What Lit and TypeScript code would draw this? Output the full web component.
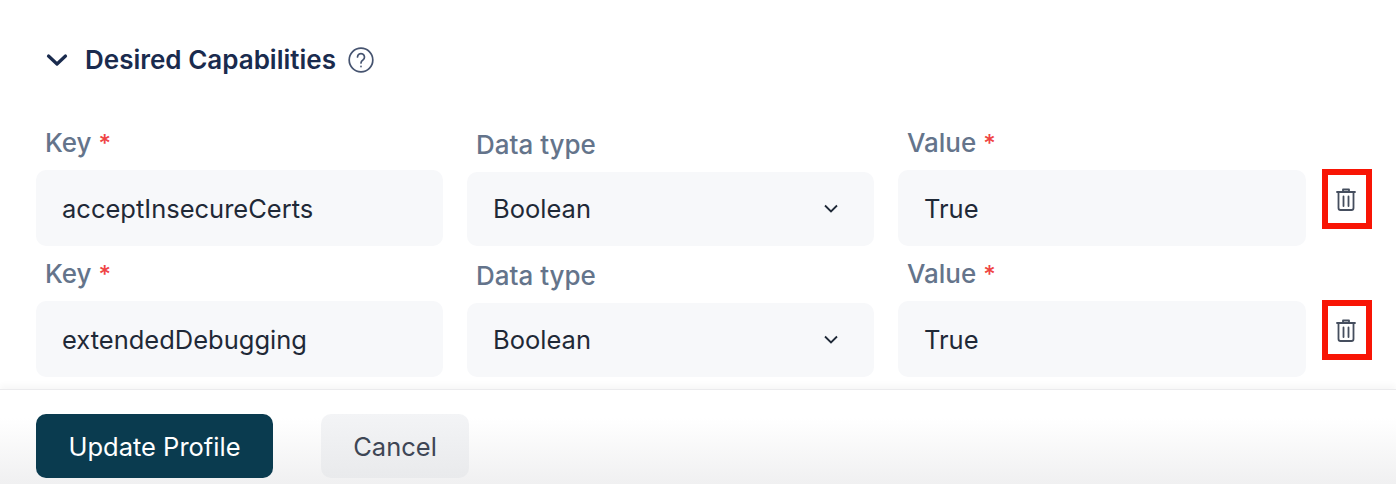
import { LitElement, html, css, svg } from 'lit'
import { customElement } from 'lit/decorators.js'

interface Capability {
  readonly key: string
  readonly type: string
  readonly value: string
}

const CAPABILITIES: ReadonlyArray<Capability> = [
  { key: 'acceptInsecureCerts', type: 'Boolean', value: 'True' },
  { key: 'extendedDebugging', type: 'Boolean', value: 'True' },
]

const trashIcon = svg`
  <svg class="trash" width="20" height="24" viewBox="0 0 20 24" fill="none" stroke="#454e5e" stroke-width="1.8" stroke-linecap="round" stroke-linejoin="round">
    <path d="M1 5h18" />
    <path d="M7 5V2.5h6V5" />
    <path d="M2.5 5v16A2 2 0 0 0 4.5 23h11a2 2 0 0 0 2-2V5" />
    <path d="M7.5 9.5v9.5M12.5 9.5v9.5" />
  </svg>
`

@customElement('app-root')
export class AppRoot extends LitElement {
  static override styles = css`
    :host {
      display: block;
      height: 484px;
      overflow: hidden;
      background: #fff;
      font-family: Inter, 'Noto Sans', sans-serif;
      color: #1f2937;
    }

    .heading {
      display: flex;
      align-items: center;
      height: 120px;
      padding: 0 0 1px 46px;
      box-sizing: border-box;
    }

    .heading h2 {
      margin: 0 12px 0 17px;
      font-size: 26px;
      font-weight: 600;
      color: #1a2b4e;
    }

    .rows {
      height: 269px;
      padding-left: 36px;
      box-sizing: border-box;
    }

    .row {
      display: flex;
      height: 131px;
    }

    .fields {
      display: grid;
      grid-template-columns: 407px 407px 408px;
      gap: 24px;
    }

    .field {
      display: flex;
      flex-direction: column;
    }

    label {
      height: 50px;
      box-sizing: border-box;
      padding: 8px 0 0 9px;
      font-size: 26px;
      font-weight: 500;
      line-height: 30px;
      color: #64748b;
    }

    .required {
      font-size: 24px;
      color: #ef4444;
    }

    .control {
      display: flex;
      align-items: center;
      justify-content: space-between;
      height: 76px;
      box-sizing: border-box;
      padding: 1px 26px 0;
      border-radius: 10px;
      background: #f7f8fa;
      font-size: 25.5px;
      color: #1f2937;
    }

    .select {
      height: 74px;
      margin-top: 2px;
    }

    .select.control {
      padding: 0 35px 1px 26px;
    }

    .field.type label {
      padding-top: 10px;
    }

    .remove {
      display: flex;
      align-items: center;
      justify-content: center;
      align-self: start;
      width: 50px;
      height: 60px;
      margin: 49px 0 0 16px;
      padding-right: 2px;
      box-sizing: border-box;
      border: 6px solid #f81505;
    }

    .footer {
      display: flex;
      gap: 48px;
      height: 95px;
      box-sizing: border-box;
      padding: 24px 0 0 36px;
      border-top: 1px solid #ebebed;
      box-shadow: 0 -4px 6px rgba(0, 0, 0, 0.03);
      background: linear-gradient(#fff 30%, #f0f0f1 100%);
    }

    button {
      height: 64px;
      border: none;
      border-radius: 10px;
      font-family: inherit;
      font-size: 25.5px;
      font-weight: 400;
    }

    .primary {
      width: 237px;
      background: #0a3b4f;
      color: #fff;
    }

    .secondary {
      width: 148px;
      background: linear-gradient(#f3f4f6, #e9eaec);
      color: #3e4655;
    }
  `

  private renderRow(row: Capability) {
    return html`
      <div class="row">
        <div class="fields">
          <div class="field">
            <label>Key <span class="required">*</span></label>
            <div class="control">${row.key}</div>
          </div>
          <div class="field type">
            <label>Data type</label>
            <div class="control select">
              ${row.type}
              <svg width="16" height="10" viewBox="0 0 16 10" fill="none" stroke="#1f2937" stroke-width="1.8">
                <path d="M2 1.5l6 6 6-6" />
              </svg>
            </div>
          </div>
          <div class="field">
            <label>Value <span class="required">*</span></label>
            <div class="control">${row.value}</div>
          </div>
        </div>
        <div class="remove">${trashIcon}</div>
      </div>
    `
  }

  override render() {
    return html`
      <div class="heading">
        <svg width="22" height="14" viewBox="0 0 22 14" fill="none" stroke="#1a2b4e" stroke-width="3.2" stroke-linecap="round" stroke-linejoin="round">
          <path d="M2.5 3l8.5 8 8.5-8" />
        </svg>
        <h2>Desired Capabilities</h2>
        <svg width="26" height="26" viewBox="0 0 26 26" fill="none" stroke="#45536f" stroke-width="1.7" stroke-linecap="round">
          <circle cx="13" cy="13" r="11.8" />
          <path d="M9.5 10a3.5 3.5 0 1 1 5.4 3c-1.3.8-1.9 1.6-1.9 3" />
          <path d="M13 19.4v.2" />
        </svg>
      </div>
      <div class="rows">${CAPABILITIES.map(row => this.renderRow(row))}</div>
      <div class="footer">
        <button class="primary">Update Profile</button>
        <button class="secondary">Cancel</button>
      </div>
    `
  }
}
